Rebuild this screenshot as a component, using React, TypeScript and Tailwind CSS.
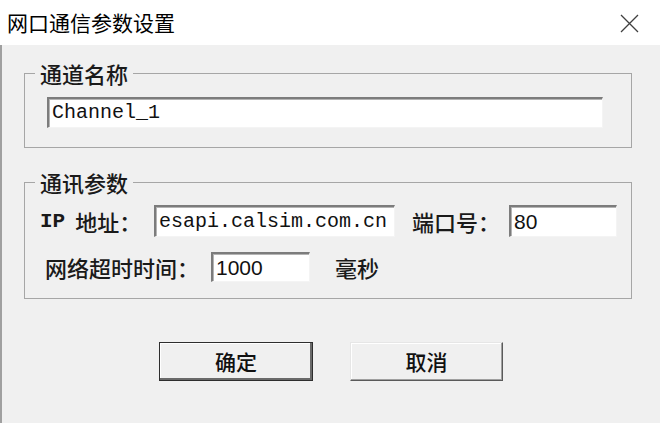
import React from 'react';

const cjk = "font-['Noto_Sans_CJK_SC','Noto_Sans',sans-serif]";
const label = `${cjk} text-[22px] leading-none whitespace-nowrap shrink-0 text-[#1a1a1a] font-medium`;
const sunken =
  'bg-white border-t-2 border-l-2 border-t-[#7c7c7c] border-l-[#7c7c7c] border-b border-r border-b-[#f4f4f4] border-r-[#f4f4f4] shadow-[inset_1px_1px_0_#b4b4b4]';

function TextBox({ value, className, mono }: { value: string; className: string; mono?: boolean }) {
  return (
    <div
      className={`${sunken} ${className} shrink-0 flex items-center pl-[3px] overflow-hidden whitespace-nowrap text-[#111] ${
        mono ? "font-['Liberation_Mono',monospace] text-[20px]" : "font-['Liberation_Sans',Arial,sans-serif] text-[21px]"
      }`}
    >
      {value}
    </div>
  );
}

function Group({ title, children, className }: { title: string; children: React.ReactNode; className?: string }) {
  return (
    <fieldset className={`ml-[22px] w-[608px] border border-[#a6a6a6] px-[10px] ${className ?? ''}`}>
      <legend className={`${cjk} px-[5px] text-[22px] leading-[24px] font-medium text-[#1a1a1a]`}>{title}</legend>
      {children}
    </fieldset>
  );
}

export default function App() {
  return (
    <div className="w-[660px] h-[423px] bg-[#f0f0f0] flex flex-col overflow-hidden select-none">
      {/* title bar */}
      <div className="h-[45px] bg-white flex items-center justify-between pl-[7px] pr-[21px] shrink-0">
        <span className={`${cjk} text-[21px] text-black`}>网口通信参数设置</span>
        <svg width="19" height="19" viewBox="0 0 19 19" className="mt-[1px]">
          <path d="M1 1 L18 18 M18 1 L1 18" stroke="#404040" strokeWidth="1.3" fill="none" />
        </svg>
      </div>

      <div className="flex-1 border-l-2 border-[#a0a0a0] flex flex-col">
        <Group title="通道名称" className="mt-[16px] pb-[19px]">
          <TextBox value="Channel_1" mono className="ml-[12px] mt-[12px] w-[556px] h-[31px]" />
        </Group>

        <Group title="通讯参数" className="mt-[22px] pb-[16px]">
          <div className="flex items-center mt-[11px]">
            <span className="ml-[5px] w-[114px] shrink-0 flex items-center whitespace-nowrap">
              <span className="font-['Liberation_Mono',monospace] text-[21px] leading-none font-semibold text-[#1a1a1a]">IP</span>
              <span className={`${label} ml-[10px]`}>地址：</span>
            </span>
            <TextBox value="esapi.calsim.com.cn" mono className="w-[241px] h-[32px]" />
            <span className={`${label} ml-[17px] w-[97px]`}>端口号：</span>
            <TextBox value="80" className="w-[108px] h-[32px]" />
          </div>
          <div className="flex items-center mt-[15px]">
            <span className={`${label} ml-[10px] w-[166px]`}>网络超时时间：</span>
            <TextBox value="1000" className="w-[99px] h-[30px]" />
            <span className={`${label} ml-[25px]`}>毫秒</span>
          </div>
        </Group>

        <div className="flex justify-center gap-[37px] mt-[43px]">
          <button
            className={`${cjk} w-[154px] h-[39px] bg-[#f0f0f0] border border-[#2e2e2e] shadow-[inset_-2px_-2px_0_#6a6a6a,inset_1px_1px_0_#ffffff] text-[21px] font-medium text-[#111]`}
          >
            确定
          </button>
          <button
            className={`${cjk} w-[153px] h-[39px] bg-[#f0f0f0] border border-t-[#e6e6e6] border-l-[#e6e6e6] border-b-[#5a5a5a] border-r-[#5a5a5a] shadow-[inset_-1px_-1px_0_#a0a0a0,inset_1px_1px_0_#ffffff] text-[21px] font-medium text-[#111]`}
          >
            取消
          </button>
        </div>
      </div>
    </div>
  );
}
